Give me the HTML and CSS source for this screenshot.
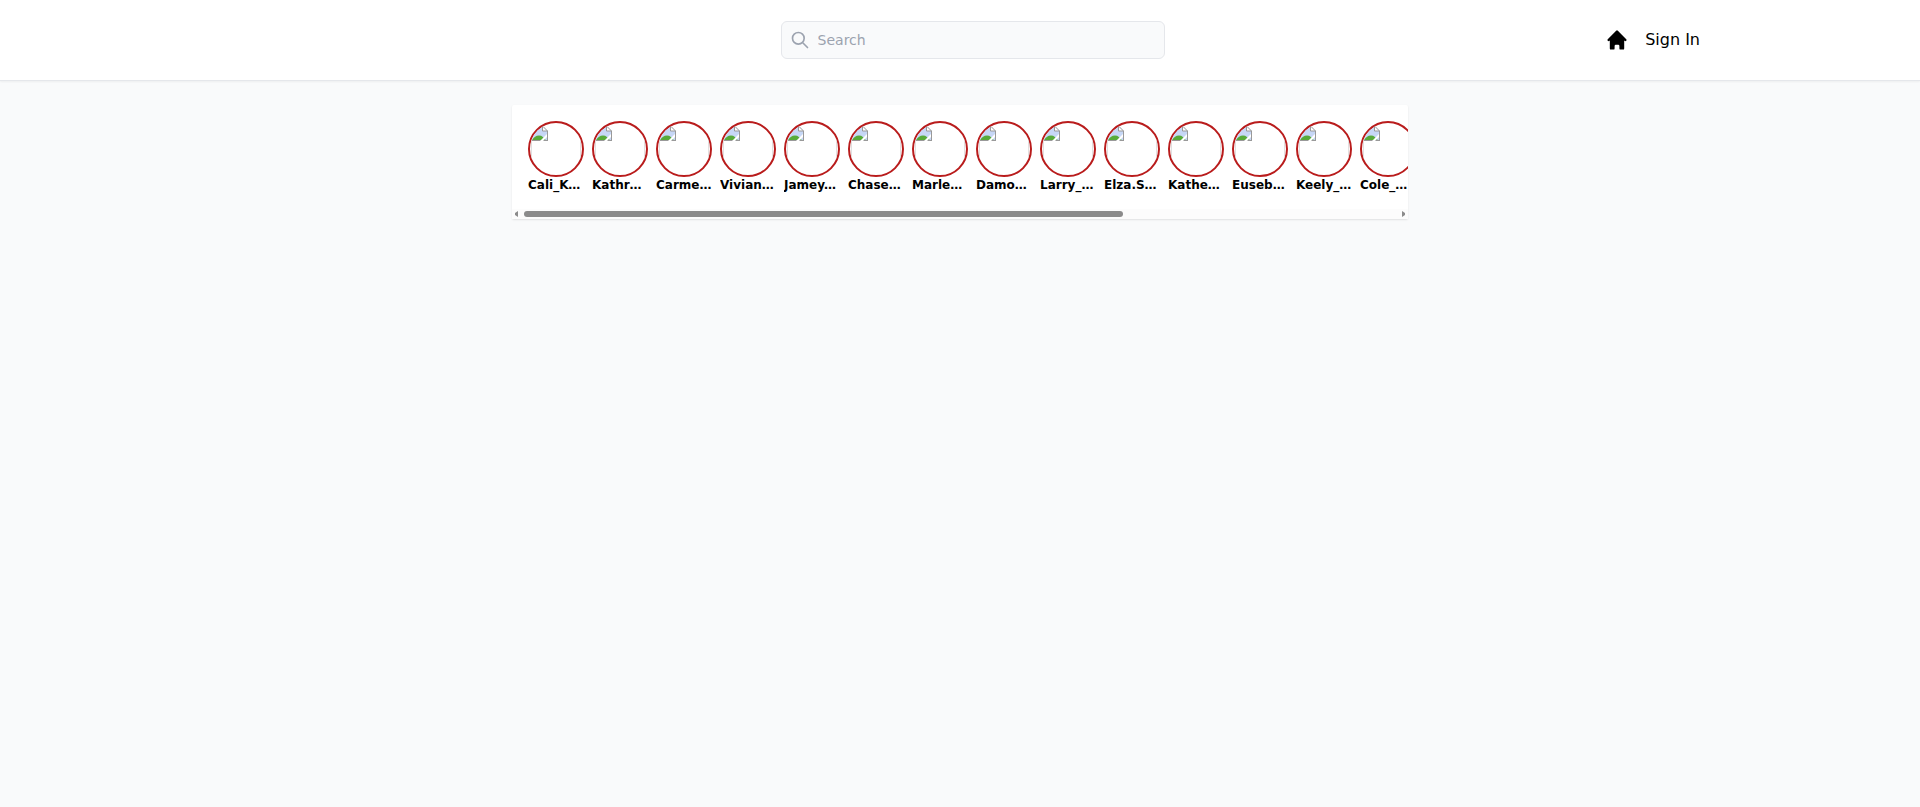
FILE: index.html
```html
<!DOCTYPE html>
<html lang="en">
<head>
  <meta charset="UTF-8">
  <meta name="viewport" content="width=device-width, initial-scale=1.0">
  <title>Home</title>
  <link rel="stylesheet" href="styles.css">
</head>
<body>
  <header class="header">
    <div class="header-inner">
      <div class="logo"></div>
      <label class="search">
        <svg class="search-icon" viewBox="0 0 24 24" fill="none" stroke="currentColor" stroke-width="2" stroke-linecap="round" stroke-linejoin="round" aria-hidden="true"><path d="M21 21l-6-6m2-5a7 7 0 11-14 0 7 7 0 0114 0z"/></svg>
        <input type="text" placeholder="Search" aria-label="Search">
      </label>
      <nav class="nav">
        <a href="#" aria-label="Home"><svg class="home-icon" viewBox="0 0 20 20" fill="currentColor" aria-hidden="true"><path d="M10.707 2.293a1 1 0 00-1.414 0l-7 7a1 1 0 001.414 1.414L4 10.414V17a1 1 0 001 1h2a1 1 0 001-1v-2a1 1 0 011-1h2a1 1 0 011 1v2a1 1 0 001 1h2a1 1 0 001-1v-6.586l.293.293a1 1 0 001.414-1.414l-7-7z"/></svg></a>
        <button type="button" class="sign-in">Sign In</button>
      </nav>
    </div>
  </header>

  <main class="feed">
    <div class="stories" id="stories"></div>
    <div class="scrollbar" aria-hidden="true">
      <svg viewBox="0 0 12 10"><path d="M6 2v6L3 6V4z"/></svg>
      <div class="track"><div class="thumb" id="thumb"></div></div>
      <svg viewBox="0 0 12 10"><path d="M6 2v6l3-2V4z"/></svg>
    </div>
  </main>

  <template id="story">
    <div class="story">
      <div class="avatar">
        <div class="frame">
          <svg viewBox="0 0 16 16" aria-hidden="true">
            <path d="M0 0h11l5 5v10H0z" fill="#c6d7f6"/>
            <path d="M0 14.500c1-3 4-5 7-5s5 2 7 5z" fill="#57ab3a"/>
            <path d="M11 0v5h5z" fill="#fff"/>
            <path d="M0 .5h11l4.500 4.500v10M10.500 .5V5h5M0 14.500h16" fill="none" stroke="#999"/>
            <path d="M15 8v3l-4 4H8z" fill="#fff"/>
          </svg>
        </div>
      </div>
      <p></p>
    </div>
  </template>

  <script>
    const names = ['Cali_Kuhn', 'Kathryn42', 'Carmella12', 'Vivianne_K', 'Jamey.Kub', 'Chase_Rau', 'Marlene55', 'Damon.Rath', 'Larry_Mills', 'Elza.Schmidt', 'Katherine9', 'Eusebio_R', 'Keely_Kling', 'Cole_Ward', 'Alice_Batz', 'Hannah.Fay', 'Oscar_Lind', 'Nelson_Roy', 'Maria_Koss', 'Peter.Ryan'];
    const template = document.getElementById('story');
    const stories = document.getElementById('stories');
    const thumb = document.getElementById('thumb');

    names.forEach(name => {
      const story = template.content.cloneNode(true);
      story.querySelector('p').textContent = name;
      stories.appendChild(story);
    });

    function updateThumb() {
      thumb.style.width = stories.clientWidth / stories.scrollWidth * 100 + '%';
      thumb.style.marginLeft = stories.scrollLeft / stories.scrollWidth * 100 + '%';
    }

    stories.addEventListener('scroll', updateThumb);
    window.addEventListener('resize', updateThumb);
    window.addEventListener('load', updateThumb);
  </script>
</body>
</html>
```

FILE: styles.css
```css
* {
  box-sizing: border-box;
}

body {
  margin: 0;
  min-height: 100vh;
  background: #f9fafb;
  color: #000;
  font-family: 'DejaVu Sans', sans-serif;
  font-size: 16px;
  line-height: 24px;
}

.header {
  background: #fff;
  border-bottom: 1px solid #e5e7eb;
  box-shadow: 0 1px 2px rgba(0, 0, 0, 0.05);
}

.header-inner {
  display: flex;
  align-items: center;
  justify-content: space-between;
  max-width: 1480px;
  height: 80px;
  margin: 0 auto;
}

.logo {
  width: 120px;
}

.search {
  display: flex;
  align-items: center;
  gap: 8px;
  width: 384px;
  height: 38px;
  padding: 0 8px;
  background: #f9fafb;
  border: 1px solid #e5e7eb;
  border-radius: 6px;
}

.search-icon {
  flex: none;
  width: 20px;
  height: 20px;
  color: #9ca3af;
}

.search input {
  flex: 1;
  min-width: 0;
  padding: 0;
  border: 0;
  outline: none;
  background: transparent;
  font: inherit;
  font-size: 14px;
  line-height: 20px;
}

.search input::placeholder {
  color: #9ca3af;
}

.nav {
  display: flex;
  align-items: center;
  gap: 16px;
}

.nav a {
  color: inherit;
}

.home-icon {
  display: block;
  width: 24px;
  height: 24px;
}

.sign-in {
  padding: 0;
  border: 0;
  background: none;
  color: inherit;
  font: inherit;
  cursor: pointer;
}

.feed {
  max-width: 896px;
  margin: 24px auto 0;
  background: #fff;
  border-radius: 2px;
  box-shadow: 0 1px 2px rgba(0, 0, 0, 0.1);
}

.stories {
  display: flex;
  gap: 8px;
  padding: 16px;
  overflow-x: auto;
  scrollbar-width: none;
}

.story {
  flex: none;
  width: 56px;
}

.avatar {
  height: 56px;
  padding: 1px;
  overflow: hidden;
  border: 2px solid #b91c1c;
  border-radius: 50%;
}

.frame {
  height: 50px;
  padding-top: 2px;
  border: solid #e0e0e0;
  border-width: 0 1px;
}

.frame svg {
  display: block;
  width: 16px;
  height: 16px;
}

.story p {
  margin: 0;
  overflow: hidden;
  font-size: 12px;
  font-weight: bold;
  line-height: 16px;
  text-overflow: ellipsis;
  white-space: nowrap;
}

.scrollbar {
  display: flex;
  align-items: center;
  height: 10px;
  background: #fcfcfc;
}

.scrollbar svg {
  flex: none;
  width: 12px;
  height: 10px;
  fill: #8b8b8b;
}

.track {
  flex: 1;
}

.thumb {
  height: 6px;
  background: #8b8b8b;
  border-radius: 3px;
}
```
